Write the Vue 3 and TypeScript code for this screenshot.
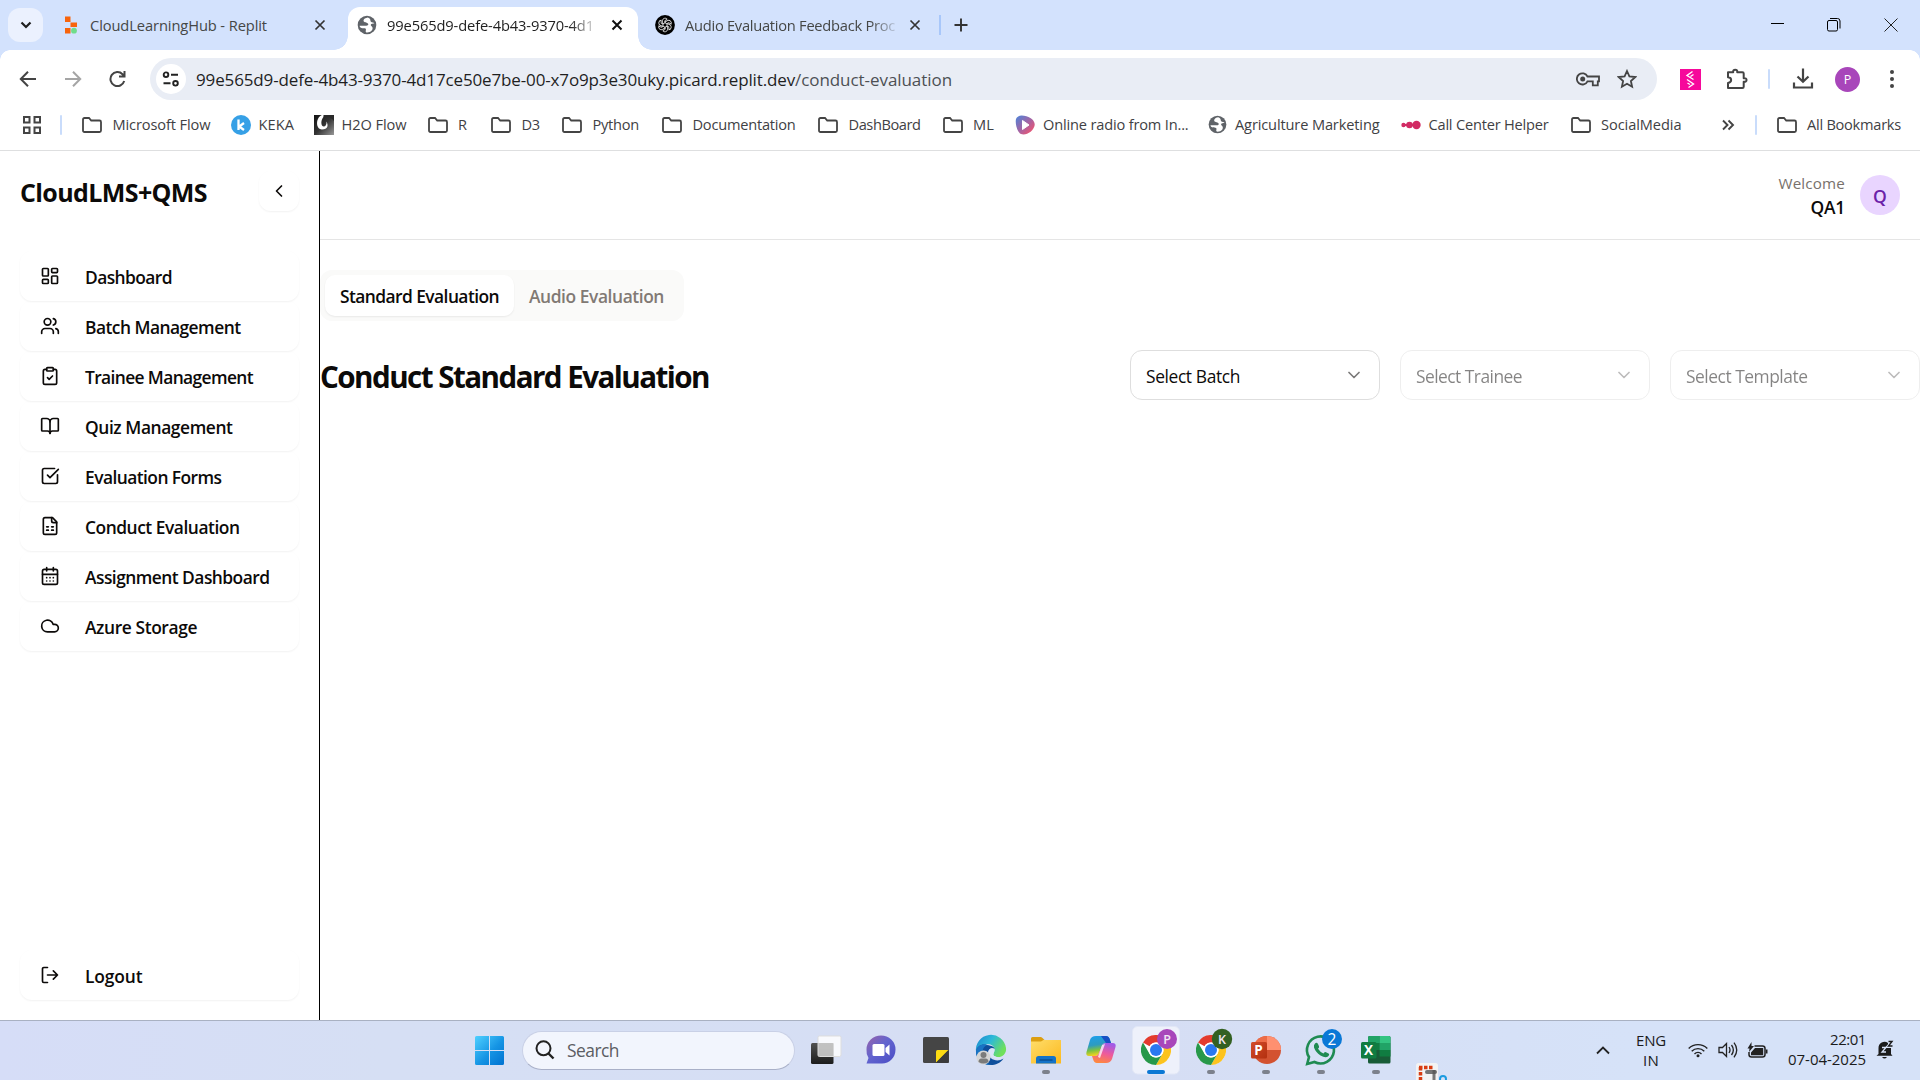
<script setup lang="ts">
import type { Directive } from 'vue'

// Tracks a label in or out so that it occupies the given width in pixels.
const vFit: Directive<HTMLElement, number> = {
  mounted(el, { value }) {
    const natural = el.getBoundingClientRect().width
    const count = (el.textContent ?? '').trim().length
    if (count > 0) el.style.letterSpacing = `${(value - natural) / count}px`
  },
}

interface Bookmark { label: string; icon: 'folder' | 'keka' | 'h2o' | 'radio' | 'globe' | 'dots'; slot: number; width: number }
const bookmarks: Bookmark[] = [
  { label: 'Microsoft Flow', icon: 'folder', slot: 148.5, width: 98 },
  { label: 'KEKA', icon: 'keka', slot: 83, width: 35.5 },
  { label: 'H2O Flow', icon: 'h2o', slot: 114, width: 65 },
  { label: 'R', icon: 'folder', slot: 63.5, width: 9 },
  { label: 'D3', icon: 'folder', slot: 71, width: 18.5 },
  { label: 'Python', icon: 'folder', slot: 100, width: 46.5 },
  { label: 'Documentation', icon: 'folder', slot: 156, width: 103 },
  { label: 'DashBoard', icon: 'folder', slot: 124.5, width: 72 },
  { label: 'ML', icon: 'folder', slot: 72.5, width: 21 },
  { label: 'Online radio from In...', icon: 'radio', slot: 193, width: 145.5 },
  { label: 'Agriculture Marketing', icon: 'globe', slot: 192.5, width: 144.5 },
  { label: 'Call Center Helper', icon: 'dots', slot: 170, width: 120 },
  { label: 'SocialMedia', icon: 'folder', slot: 148, width: 80.5 },
]

interface NavItem { label: string; width: number; icon: string }
const nav: NavItem[] = [
  { label: 'Dashboard', width: 87, icon: '<rect width="7" height="9" x="3" y="3" rx="1"/><rect width="7" height="5" x="14" y="3" rx="1"/><rect width="7" height="9" x="14" y="12" rx="1"/><rect width="7" height="5" x="3" y="16" rx="1"/>' },
  { label: 'Batch Management', width: 155.5, icon: '<path d="M16 21v-2a4 4 0 0 0-4-4H6a4 4 0 0 0-4 4v2"/><circle cx="9" cy="7" r="4"/><path d="M22 21v-2a4 4 0 0 0-3-3.87"/><path d="M16 3.13a4 4 0 0 1 0 7.75"/>' },
  { label: 'Trainee Management', width: 168, icon: '<rect width="8" height="4" x="8" y="2" rx="1"/><path d="M16 4h2a2 2 0 0 1 2 2v14a2 2 0 0 1-2 2H6a2 2 0 0 1-2-2V6a2 2 0 0 1 2-2h2"/><path d="m9 14 2 2 4-4"/>' },
  { label: 'Quiz Management', width: 147.5, icon: '<path d="M12 7v14"/><path d="M3 18a1 1 0 0 1-1-1V4a1 1 0 0 1 1-1h5a4 4 0 0 1 4 4 4 4 0 0 1 4-4h5a1 1 0 0 1 1 1v13a1 1 0 0 1-1 1h-6a3 3 0 0 0-3 3 3 3 0 0 0-3-3z"/>' },
  { label: 'Evaluation Forms', width: 136.5, icon: '<path d="M21 10.5V19a2 2 0 0 1-2 2H5a2 2 0 0 1-2-2V5a2 2 0 0 1 2-2h12.5"/><path d="m9 11 3 3L22 4"/>' },
  { label: 'Conduct Evaluation', width: 154.5, icon: '<path d="M15 2H6a2 2 0 0 0-2 2v16a2 2 0 0 0 2 2h12a2 2 0 0 0 2-2V7Z"/><path d="M14 2v4a2 2 0 0 0 2 2h4"/><path d="M8 13h2"/><path d="M14 13h2"/><path d="M8 17h2"/><path d="M14 17h2"/>' },
  { label: 'Assignment Dashboard', width: 184.5, icon: '<path d="M8 2v4"/><path d="M16 2v4"/><rect width="18" height="18" x="3" y="4" rx="2"/><path d="M3 10h18"/><path d="M8 14h.01"/><path d="M12 14h.01"/><path d="M16 14h.01"/><path d="M8 18h.01"/><path d="M12 18h.01"/><path d="M16 18h.01"/>' },
  { label: 'Azure Storage', width: 112, icon: '<path d="M17.5 19H9a7 7 0 1 1 6.71-9h1.79a4.5 4.5 0 1 1 0 9Z"/>' },
]

const selects = [
  { label: 'Select Batch', width: 94, disabled: false },
  { label: 'Select Trainee', width: 106, disabled: true },
  { label: 'Select Template', width: 121.5, disabled: true },
]
</script>

<template>
  <div class="screen">
    <svg class="defs" width="0" height="0">
      <defs>
        <linearGradient id="g-win" x1="0" y1="0" x2="1" y2="1"><stop offset="0" stop-color="#4fd0ff" /><stop offset=".55" stop-color="#1594e4" /><stop offset="1" stop-color="#0072d0" /></linearGradient>
        <linearGradient id="g-chat" x1="0" y1="0" x2="1" y2="1"><stop offset="0" stop-color="#9a63a8" /><stop offset=".45" stop-color="#6264cf" /><stop offset="1" stop-color="#4a4cc4" /></linearGradient>
        <linearGradient id="g-edge" x1="0" y1="0" x2="1" y2=".5"><stop offset="0" stop-color="#1a84cf" /><stop offset=".5" stop-color="#2db9d8" /><stop offset="1" stop-color="#6fe05a" /></linearGradient>
        <linearGradient id="g-folder" x1="0" y1="0" x2="1" y2="1"><stop offset="0" stop-color="#ffdd6a" /><stop offset="1" stop-color="#fcb91e" /></linearGradient>
        <linearGradient id="g-cop1" x1="0" y1="0" x2=".2" y2="1"><stop offset="0" stop-color="#1c9ff0" /><stop offset=".5" stop-color="#2d9bc0" /><stop offset=".75" stop-color="#7cc243" /><stop offset="1" stop-color="#f2d21f" /></linearGradient>
        <linearGradient id="g-cop2" x1=".6" y1="0" x2=".3" y2="1"><stop offset="0" stop-color="#a05be8" /><stop offset=".5" stop-color="#ee5a9b" /><stop offset="1" stop-color="#ff8a3c" /></linearGradient>
        <linearGradient id="g-radio" x1="0" y1="0" x2="1" y2="1"><stop offset=".1" stop-color="#5b7fd0" /><stop offset=".5" stop-color="#a464a4" /><stop offset=".9" stop-color="#f2546e" /></linearGradient>
        <linearGradient id="g-h2o" x1="0" y1="0" x2="1" y2="1"><stop offset="0" stop-color="#111" /><stop offset=".5" stop-color="#333" /><stop offset="1" stop-color="#999" /></linearGradient>
        <linearGradient id="g-dark" x1="0" y1="0" x2="0" y2="1"><stop offset="0" stop-color="#505050" /><stop offset="1" stop-color="#1c1c1c" /></linearGradient>
        <linearGradient id="g-ppt" x1="0" y1="0" x2="1" y2="1"><stop offset="0" stop-color="#d24a2a" /><stop offset="1" stop-color="#b3300f" /></linearGradient>
        <symbol id="i-globe" viewBox="0 0 20 20"><circle cx="10" cy="10" r="9.3" fill="#5f6368" /><path d="M10.8 2.4c-2.3.3-4.3 1.5-4.3 3.1 0 2.3 3.3 1.7 4.5 3.1.9 1.4-.2 2.3-2.2 2.2H2.6C3 13.500 5.500 13.200 7.700 13.300c1.500.2 1.400 1.500 1 2.700-.2.8.3 1.500 1.400 1.600 4-.1 6-2.800 5.400-5-.4-1.400-2-1.500-1.700-2.800.3-1.300 2-1.100 3.600-1.300-.5-1.500-2.700-.9-3.500-1.800-.9-1.200.2-3.300-3.100-4.300z" fill="#fff" /></symbol>
        <symbol id="i-chrome" viewBox="-15 -15 30 30"><circle r="15" fill="#fff" /><path d="M-13-7.500A15 15 0 0 1 13-7.500H0A7.500 7.500 0 0 0-6.500-3.750Z" fill="#e33b2e" /><path d="M13-7.500A15 15 0 0 1 0 15L6.500 3.750A7.500 7.500 0 0 0 0-7.500Z" fill="#fcc31e" /><path d="M0 15A15 15 0 0 1-13-7.500L-6.500 3.750A7.500 7.500 0 0 0 6.500 3.750Z" fill="#27984a" /><circle r="7.500" fill="#fff" /><circle r="6" fill="#2a78f0" /></symbol>
      </defs>
    </svg>

    <header class="tabstrip">
      <div class="tab-search"><svg width="12" height="8" viewBox="0 0 12 8"><path d="M1.500 1.500 6 6l4.500-4.500" fill="none" stroke="#1f1f1f" stroke-width="2.200" /></svg></div>
      <div class="tab first">
        <svg class="replit" width="14" height="18" viewBox="0 0 14 18"><path d="M1 .5h5.500V6H1zM6.500 6.500H13V11H6.500zM1 12h5.500v5.500H1z" fill="#f8640c" /><circle cx="10" cy="14.700" r="2.900" fill="#6fdd8b" /></svg>
        <span class="tab-text"><span v-fit="177" class="fit">CloudLearningHub - Replit</span></span>
        <svg class="x" width="12" height="12" viewBox="0 0 12 12"><path d="m1.500 1.500 9 9m0-9-9 9" /></svg>
      </div>
      <div class="tab active">
        <svg class="favicon" width="20" height="20"><use href="#i-globe" /></svg>
        <span class="tab-text faded"><span v-fit="207" class="fit">99e565d9-defe-4b43-9370-4d1</span></span>
        <svg class="x" width="12" height="12" viewBox="0 0 12 12"><path d="m1.500 1.500 9 9m0-9-9 9" /></svg>
      </div>
      <div class="tab third">
        <svg width="20" height="20" viewBox="-10 -10 20 20"><circle r="9.900" fill="#000" /><g fill="none" stroke="#ddd" stroke-width=".9"><path v-for="n in 6" :key="n" :transform="`rotate(${n * 60})`" d="M-2.600-1.500V-4.200a2.700 2.700 0 0 1 4.800-1.600L-.2-4.300V-2.400L2.600-.8" /></g></svg>
        <span class="tab-text faded"><span v-fit="210" class="fit">Audio Evaluation Feedback Proc</span></span>
        <svg class="x" width="12" height="12" viewBox="0 0 12 12"><path d="m1.500 1.500 9 9m0-9-9 9" /></svg>
      </div>
      <i class="strip-divider"></i>
      <svg class="plus" width="14" height="14" viewBox="0 0 14 14"><path d="M7 .5v13M.5 7h13" stroke="#333" stroke-width="1.900" /></svg>
      <div class="window-controls">
        <svg width="14" height="14" viewBox="0 0 14 14"><path d="M1 5.500h13" stroke="#000" /></svg>
        <svg width="14" height="14" viewBox="0 0 14 14" fill="none" stroke="#000"><rect x=".5" y="2.500" width="10" height="10.500" rx="1.500" /><path d="M3 .5h7.500q2.500 0 2.500 2.500v7.500" /></svg>
        <svg width="14" height="14" viewBox="0 0 14 14"><path d="m.5.5 13 13m0-13-13 13" stroke="#222" /></svg>
      </div>
    </header>

    <div class="toolbar">
      <div class="nav-buttons">
        <svg width="18" height="18" viewBox="0 0 18 18"><path d="M17 9H2M9 1.800 1.800 9 9 16.200" /></svg>
        <svg class="off" width="18" height="18" viewBox="0 0 18 18"><path d="M1 9h15M9 1.800 16.200 9 9 16.200" /></svg>
        <svg width="18" height="18" viewBox="0 0 18 18"><path d="M15.200 11A7 7 0 1 1 13.500 4.200l1.800 1.800M15.500 1v5.500H10" /></svg>
      </div>
      <div class="omnibox">
        <span class="site-info"><svg width="18" height="16" viewBox="0 0 18 16" fill="none" stroke="#222" stroke-width="1.900"><circle cx="4" cy="3.700" r="2.300" /><path d="M9 3.700h7M1.500 12.300h7" /><circle cx="13.500" cy="12.300" r="2.300" /></svg></span>
        <span class="url"><span v-fit="599" class="fit">99e565d9-defe-4b43-9370-4d17ce50e7be-00-x7o9p3e30uky.picard.replit.dev</span><span v-fit="157" class="fit path">/conduct-evaluation</span></span>
        <svg class="key" width="24" height="16" viewBox="0 0 24 16" fill="none" stroke="#444" stroke-width="1.800"><path d="M11.500 5.500H23v4.800h-1.200v4h-5v-4H11.500A5.600 5.600 0 1 1 11.500 5.500Z" /><circle cx="6.700" cy="8" r="2.500" fill="#444" stroke="none" /></svg>
        <svg class="star" width="20" height="20" viewBox="0 0 20 20"><path d="m10 2 2.400 5.400 5.900.6-4.400 4 1.200 5.700L10 14.700l-5.100 3 1.200-5.700-4.400-4 5.900-.6Z" fill="none" stroke="#444" stroke-width="1.800" /></svg>
      </div>
      <svg class="ext" width="21" height="21" viewBox="0 0 21 21"><path fill="#f6099b" d="M0 0h21v21H0z" /><path d="M12.500 2.500 7 6.500l6.500 4M13.500 5.500l-3 2M7 10.500l6.500 4.500-5 3.500M7.500 14l2.500 1.500" fill="none" stroke="#fff" stroke-width="1.400" /></svg>
      <svg class="puzzle" width="22" height="22" viewBox="0 0 22 22"><path d="M2 4.200h5.200c-.7-3.400 4.800-3.400 4 0h5.200q1.300 0 1.300 1.300v4.700c3.800-.7 3.800 4.300 0 3.600v5q0 1.300-1.300 1.300H2v-5.200c4.200-.8 4.200-5.300 0-5.700Z" fill="none" stroke="#444" stroke-width="2" stroke-linejoin="round" /></svg>
      <i class="bar-divider"></i>
      <svg class="download" width="22" height="22" viewBox="0 0 22 22"><path d="M11 .5v13M5.500 8.500 11 13.800 16.500 8.500M2 14.500v5h18v-5" fill="none" stroke="#444" stroke-width="2.200" /></svg>
      <span class="profile">P</span>
      <svg class="kebab" width="4" height="20" viewBox="0 0 4 20" fill="#444"><circle cx="2" cy="3" r="2" /><circle cx="2" cy="10" r="2" /><circle cx="2" cy="17" r="2" /></svg>
    </div>

    <div class="bookmarks">
      <svg class="apps" width="18" height="18" viewBox="0 0 18 18" fill="none" stroke="#444" stroke-width="2"><path d="M1 1h5.500v5.500H1zM11.500 1H17v5.500h-5.500zM1 11.500h5.500V17H1zM11.500 11.500H17V17h-5.500z" /></svg>
      <i class="bar-divider first-divider"></i>
      <div v-for="b in bookmarks" :key="b.label" class="bookmark" :class="{ wide: b.icon === 'folder' }" :style="{ width: b.slot + 'px' }">
        <svg v-if="b.icon === 'folder'" width="20" height="20" viewBox="0 0 20 20"><path d="M1 4.500q0-1.500 1.500-1.500H7l2.200 2.500h8.300q1.500 0 1.500 1.500v8.500q0 1.500-1.500 1.500h-15Q1 17 1 15.500Z" fill="none" stroke="#444" stroke-width="1.800" /></svg>
        <svg v-else-if="b.icon === 'keka'" width="20" height="20" viewBox="0 0 20 20"><circle cx="10" cy="10" r="10" fill="#36a0e6" /><path d="M7.500 4.500v10.500M13 8l-4.800 3.500L13 15" fill="none" stroke="#fff" stroke-width="2.300" /></svg>
        <svg v-else-if="b.icon === 'h2o'" width="20" height="20" viewBox="0 0 20 20"><path fill="url(#g-h2o)" d="M0 0h20v20H0z" /><path d="M8 0C2 2 1 14 8 14.500c6 0 6.500-4 4.500-8 .5 5-3 6-4.500 4C6.500 7 8 3 11 0Z" fill="#fff" /><path d="M9.500 0H20v6C17 1.500 13 1.500 9.500 2Z" fill="#2a2a2a" /></svg>
        <svg v-else-if="b.icon === 'radio'" width="20" height="20" viewBox="0 0 20 20"><path d="M1 4Q3-.5 9 .7c7 1.300 11 5 10.700 9.300C19 16 11 21 6 19 2 17 0 8 1 4Z" fill="url(#g-radio)" /><path d="M7.500 5.500v9l6.500-4.500Z" fill="#fff" stroke="#fff" stroke-linejoin="round" /></svg>
        <svg v-else-if="b.icon === 'globe'" width="19" height="19"><use href="#i-globe" /></svg>
        <svg v-else width="20" height="10" viewBox="0 0 20 10"><path d="M2 5h14" stroke="#d22b64" stroke-width="2" /><circle cx="2.500" cy="5" r="2.200" fill="#d22b64" /><circle cx="8.500" cy="5" r="3.300" fill="#d22b64" /><circle cx="15.500" cy="5" r="4.200" fill="#d22b64" /></svg>
        <span class="bm-text"><span v-fit="b.width" class="fit">{{ b.label }}</span></span>
      </div>
      <svg class="more" width="14" height="12" viewBox="0 0 14 12"><path d="m2 1.500 4.500 4.500L2 10.500M7.500 1.500 12 6l-4.500 4.500" fill="none" stroke="#444" stroke-width="1.900" /></svg>
      <i class="bar-divider second-divider"></i>
      <div class="bookmark wide">
        <svg width="20" height="20" viewBox="0 0 20 20"><path d="M1 4.500q0-1.500 1.500-1.500H7l2.200 2.500h8.300q1.500 0 1.500 1.500v8.500q0 1.500-1.500 1.500h-15Q1 17 1 15.500Z" fill="none" stroke="#444" stroke-width="1.800" /></svg>
        <span class="bm-text"><span v-fit="94" class="fit">All Bookmarks</span></span>
      </div>
    </div>

    <div class="page">
      <aside class="sidebar">
        <div class="brand-row">
          <h1 class="brand"><span v-fit="187" class="fit">CloudLMS+QMS</span></h1>
          <button class="collapse"><svg class="lucide" viewBox="0 0 24 24"><path d="m15 18-6-6 6-6" /></svg></button>
        </div>
        <nav class="menu">
          <a v-for="item in nav" :key="item.label" class="menu-item">
            <svg class="lucide" viewBox="0 0 24 24" v-html="item.icon"></svg>
            <span class="menu-text"><span v-fit="item.width" class="fit">{{ item.label }}</span></span>
          </a>
        </nav>
        <a class="menu-item logout">
          <svg class="lucide" viewBox="0 0 24 24"><path d="m16 17 5-5-5-5M21 12H9M9 3H4.500A1.500 1.500 0 0 0 3 4.500v15A1.500 1.500 0 0 0 4.500 21H9" /></svg>
          <span class="menu-text"><span v-fit="57.5" class="fit">Logout</span></span>
        </a>
      </aside>
      <main class="content">
        <div class="topbar">
          <div class="user">
            <span class="welcome"><span v-fit="66.5" class="fit">Welcome</span></span>
            <span class="user-name"><span v-fit="34.5" class="fit">QA1</span></span>
          </div>
          <span class="avatar">Q</span>
        </div>
        <div class="switcher">
          <button class="switch on"><span v-fit="159" class="fit">Standard Evaluation</span></button>
          <button class="switch"><span v-fit="135" class="fit">Audio Evaluation</span></button>
        </div>
        <div class="title-row">
          <h2 class="title"><span v-fit="389" class="fit">Conduct Standard Evaluation</span></h2>
          <div class="selects">
            <button v-for="s in selects" :key="s.label" class="select" :class="{ disabled: s.disabled }">
              <span class="select-text"><span v-fit="s.width" class="fit">{{ s.label }}</span></span>
              <svg class="lucide" viewBox="0 0 24 24"><path d="m6 9 6 6 6-6" /></svg>
            </button>
          </div>
        </div>
      </main>
    </div>

    <footer class="taskbar">
      <svg class="start" width="29" height="29" viewBox="0 0 29 29"><path d="M1.500 0H14v14H0V1.500Q0 0 1.500 0ZM15 0h12.500Q29 0 29 1.500V14H15ZM0 15h14v14H1.500Q0 29 0 27.500ZM15 15h14v12.500q0 1.500-1.500 1.500H15Z" fill="url(#g-win)" /></svg>
      <div class="search">
        <svg width="20" height="20" viewBox="0 0 20 20"><circle cx="8.500" cy="8.300" r="7" fill="none" stroke="#222" stroke-width="2" /><path d="m13.500 13.500 5 5" stroke="#222" stroke-width="2.400" /></svg>
        <span class="search-text"><span v-fit="52" class="fit">Search</span></span>
      </div>
      <div class="apps-row">
        <svg class="app" viewBox="-27 -30 55 60"><rect x="-15" y="-7" width="22.500" height="21" rx="1.500" fill="url(#g-dark)" /><rect x="-8" y="-14" width="23" height="20.500" rx="1.500" fill="#fff" fill-opacity=".82" stroke="#ddd" /><path d="M-7.500-7H7.500V6H-7.500Z" fill="#aaa" opacity=".55" /></svg>
        <svg class="app" viewBox="-27 -30 55 60"><path d="M0-14.500A14.500 14 0 0 1 14.500-.5C14.500 8 8 14 0 13.500H-14.500L-12.500 8A14.500 14 0 0 1-14.500-.5 14.500 14 0 0 1 0-14.500Z" fill="url(#g-chat)" /><rect x="-8.500" y="-6" width="12" height="12" rx="1.500" fill="#fff" /><path d="m4.500-2 4-3.500V5.500l-4-3.500Z" fill="#fff" /></svg>
        <svg class="app" viewBox="-27 -30 55 60"><rect x="-13" y="-13" width="26" height="26" rx="1.500" fill="#454545" /><path d="M0 13V1.500Q0 0 1.500 0H12.500Z" fill="#fddc12" /><path d="M0 12.500 12.500 0V13H0Z" fill="#3b3b3b" /></svg>
        <svg class="app" viewBox="-27 -30 55 60"><path d="M-15 2A15 15 0 0 1 15-2C16 5 9 8.500 4.500 6.500 0 5 4 3 3.500-1 3-5-2-7-7-5-13-3-15 0-15 2Z" fill="url(#g-edge)" /><path d="M-15 2C-14.500-4-9-6.500-4-5 1-4 3.500-3.500 3.500-1 1-3-3-1-3 3-2.500 9 6 13 12.500 8.500 9 14 3 15.500-2 15-9 14-15 9-15 2Z" fill="#0e4f9c" /><path d="M-15 2C-14.500-4-9-6.500-4-5-9-3-10 4-7 9-5 13-2 14.500 1 15-8 15.500-15 9-15 2Z" fill="#1a74c4" /><path d="M3.500-1C1-3-3-1-2.500 2.500-1.500 7.500 6 10.500 12 8 9 8.500 6 7.500 4.500 6.500 0 5 4 3 3.500-1Z" fill="#dbe4f7" /><circle cx="-7.500" cy="7.500" r="7" fill="#d5d5d5" /><circle cx="-7.500" cy="5" r="3" fill="#7b7b7b" /><path d="M-12.500 12q0-3.500 3-3.500h4q3 0 3 3.500-5 3-10 0Z" fill="#7b7b7b" /></svg>
        <svg class="app" viewBox="-27 -30 55 60"><path d="M-15-10v-1.500Q-15-13-13.500-13h8q1 0 2 1l2 2H13.500Q15-10 15-8.500V0H-15Z" fill="#dc9e11" /><path d="M-15-8.500H-5l2.500-1.500H14q1 0 1 1V13.500H-15Z" fill="url(#g-folder)" /><path d="M-10 13.500V8.500Q-10 6-7.500 6H7.500Q10 6 10 8.500v5Z" fill="#1473c8" /><path d="M-6.500 10h13" stroke="#0b4f94" stroke-width="1.500" /><rect class="dot" x="-4" y="20" width="8" height="4" rx="2" /></svg>
        <svg class="app" viewBox="-27 -30 55 60"><path d="M-5-14H5q3 0 4 4l1 3H5q-3 0-4 3L-2 3q-1 3-4 3h-6q-3.500 0-2.500-4l3.500-12q1.200-4 6-4Z" fill="url(#g-cop1)" /><path d="M0-14H5q3 0 4 4l1 3H5Z" fill="#174fc4" /><path d="M5 13H-4q-3 0-4-4L-9 6h3q3 0 4-3L1-4q1-3 4-3h6.500q4 0 3 4L11 9q-1.500 4-6 4Z" fill="url(#g-cop2)" /><path d="m1-5-4 12 2 1 5-14Z" fill="#fff" opacity=".75" /></svg>
        <svg class="app" viewBox="-27 -30 55 60"><rect x="-23.500" y="-23.500" width="47" height="47.500" rx="5" fill="#eef1fb" stroke="#e2e7f6" /><use href="#i-chrome" x="-15" y="-15" width="30" height="30" /><circle cx="11" cy="-11" r="10" fill="#a846ba" /><text x="11" y="-6.500" class="badge-letter">P</text><rect x="-9" y="20" width="18" height="4" rx="2" fill="#0b78d4" /></svg>
        <svg class="app" viewBox="-27 -30 55 60"><use href="#i-chrome" x="-15" y="-15" width="30" height="30" /><circle cx="11" cy="-11" r="10.200" fill="#336022" /><text x="11" y="-6.500" class="badge-letter">K</text><rect class="dot" x="-4" y="20" width="8" height="4" rx="2" /></svg>
        <svg class="app" viewBox="-27 -30 55 60"><circle cx="1" cy="0" r="14" fill="#d35230" /><path d="M1-14A14 14 0 0 1 15 0H1Z" fill="#ff9070" /><path d="M1-14A14 14 0 0 0-13 0H1Z" fill="#ed6c47" /><rect x="-15" y="-8" width="16" height="16.500" rx="1.500" fill="url(#g-ppt)" /><text x="-7.500" y="4.800" class="office">P</text><rect class="dot" x="-4" y="20" width="8" height="4" rx="2" /></svg>
        <svg class="app" viewBox="-27 -30 55 60"><path d="M-13.800 14-12 7A13.500 13.500 0 1 1-6.500 12Z" fill="#d6e1f6" stroke="#1f8b52" stroke-width="2.600" /><path d="M-6-6.500q1.800-1.500 3 .5l1 2.200q.5 1-1 2.500Q-.5 2.500 2.500 3.500q1.500-2 2.500-1.300l2.500 1.300q1.500 1-.5 3Q4.500 8.500-.5 5.500-5.500 2-7-2.500q-.5-2.500 1-4Z" fill="#1f8b52" /><circle cx="11" cy="-11" r="10" fill="#0a78d6" /><text x="11" y="-5.500" class="badge-num">2</text><rect class="dot" x="-4" y="20" width="8" height="4" rx="2" /></svg>
        <svg class="app" viewBox="-27 -30 55 60"><rect x="-8" y="-14" width="22.500" height="27.500" rx="1.500" fill="#185c37" /><path d="M-8-7V-12.500Q-8-14-6.500-14H3.500V-7Z" fill="#21a366" /><path d="M3.500-14h9.500q1.500 0 1.500 1.500V-7h-11Z" fill="#33c481" /><path d="M-8-7H3.500V0H-8Z" fill="#107c41" /><path d="M3.500-7h11V0h-11Z" fill="#21a366" /><path d="M3.500 0h11v6.500h-11Z" fill="#107c41" /><rect x="-15" y="-8" width="15.500" height="16.500" rx="1.500" fill="#107c41" /><text x="-7.500" y="4.800" class="office">X</text><rect class="dot" x="-4" y="20" width="8" height="4" rx="2" /></svg>
        <svg class="app" viewBox="-27 -30 55 60"><rect x="-15" y="13" width="22" height="20" rx="2.500" fill="#f3f3f3" /><path d="M-12 17.500H2M-10.500 17v13" stroke="#d83b10" stroke-width="3.500" stroke-dasharray="3.500 1.500" /><path d="M3 20v11" stroke="#777" stroke-width="3" /><rect x="-6" y="20" width="12" height="4" rx="2" fill="#555" opacity=".8" /><circle cx="12" cy="29" r="3" fill="none" stroke="#1c9be0" stroke-width="2" /></svg>
      </div>
      <div class="tray">
        <svg class="up" width="14" height="9" viewBox="0 0 14 9"><path d="m1 7.500 6-6 6 6" fill="none" stroke="#222" stroke-width="1.800" /></svg>
        <div class="lang"><span v-fit="30" class="fit">ENG</span><span v-fit="16" class="fit">IN</span></div>
        <svg class="wifi" width="20" height="16" viewBox="0 0 20 16" fill="none" stroke="#222" stroke-width="1.400"><path d="M.7 6.500a13 13 0 0 1 18.600 0M3.700 9.200a9 9 0 0 1 12.600 0M6.500 12a5 5 0 0 1 7 0" /><circle cx="10" cy="13.800" r="1.500" fill="#222" stroke="none" /></svg>
        <svg class="vol" width="21" height="18" viewBox="0 0 21 18" fill="none" stroke="#222" stroke-width="1.300"><path d="M1 6.500h3.500l4-4v13l-4-4H1ZM11 6q2 3 0 6M13.500 4q3.700 5 0 10M16 1.700q5.500 7.300 0 14.600" /></svg>
        <svg class="battery" width="21" height="17" viewBox="0 0 21 17"><path d="M7.500 4h8q2.500 0 2.500 2.500v6q0 2.500-2.500 2.500h-11Q2 15 2 12.500V10" fill="none" stroke="#222" stroke-width="1.500" /><path d="M8 6h8.200v7.200H4V10.500Zm10.800 1.500h1.700v4h-1.700ZM4.500 0 .5 6.500h2L2 10l5-6H4.500Z" fill="#222" /></svg>
        <div class="clock"><span v-fit="36" class="fit">22:01</span><span v-fit="78" class="fit">07-04-2025</span></div>
        <svg class="bell" width="18" height="20" viewBox="0 0 18 20"><path d="M2.500 14V8a6 6 0 0 1 9.500-5h3v11l1.500 1.800H.5Z" fill="#1b1b1b" /><path d="M6 17h5q-2.500 3-5 0Z" fill="#1b1b1b" /><path d="M12 2.500h3.500l-3.500 4h4" fill="none" stroke="#d8e3f8" stroke-width="3" /><path d="M6 7.500h4l-4 4.500h4" fill="none" stroke="#d8e3f8" stroke-width="1.300" /><path d="M12.500 1.500h3.500l-3.500 4.500h4" fill="none" stroke="#1b1b1b" stroke-width="1.400" /></svg>
      </div>
    </footer>
  </div>
</template>

<style>
body { margin: 0; overflow: hidden; }
</style>

<style scoped>
.screen { width: 1920px; height: 1080px; display: flex; flex-direction: column; background: #fff; font-family: "Open Sans", "Noto Sans", sans-serif; font-stretch: 94%; color: #0c0a09; overflow: hidden; }
.screen * { box-sizing: border-box; }
svg { display: block; flex: none; }
.defs { position: absolute; }
.fit { display: inline-block; white-space: pre; }
button { font: inherit; border: 0; padding: 0; background: none; color: inherit; }
h1, h2 { margin: 0; }

.tabstrip { height: 50px; background: #d3e2fd; display: flex; align-items: center; flex: none; font-size: 14.7px; color: #454746; line-height: 20px; }
.tab-search { width: 35px; height: 34px; margin-left: 8px; border-radius: 12px; background: #ebf1fe; display: flex; align-items: center; justify-content: center; }
.tab { display: flex; align-items: center; height: 50px; }
.tab .x { stroke: #333; stroke-width: 1.7; }
.tab-text { height: 20px; overflow: hidden; white-space: nowrap; }
.first { width: 305px; padding-left: 21px; }
.first .tab-text { margin-left: 10px; width: 200px; }
.first .x { margin-left: 24px; }
.first .replit { margin-right: 2px; }
.active { position: relative; width: 290px; height: 43px; margin-top: 7px; padding: 0 0 7px 9px; background: #fff; border-radius: 12px 12px 0 0; color: #1f1f1f; }
.active::before, .active::after { content: ""; position: absolute; bottom: 0; width: 14px; height: 14px; }
.active::before { left: -14px; background: radial-gradient(circle at 0 0, transparent 13.5px, #fff 14px); }
.active::after { right: -14px; background: radial-gradient(circle at 100% 0, transparent 13.5px, #fff 14px); }
.active .tab-text { margin-left: 10px; width: 208px; }
.active .x { margin-left: 16px; stroke: #111; stroke-width: 2; }
.third { padding-left: 17px; width: 301px; }
.third .tab-text { margin-left: 10px; width: 211px; }
.third .x { margin-left: 13px; }
.faded { -webkit-mask-image: linear-gradient(90deg, #000 88%, rgba(0, 0, 0, .15)); mask-image: linear-gradient(90deg, #000 88%, rgba(0, 0, 0, .15)); }
.strip-divider { width: 2px; height: 20px; background: #a8c7fa; }
.plus { margin-left: 13px; }
.window-controls { margin-left: auto; display: flex; gap: 43px; padding-right: 22px; }

.toolbar { height: 58px; display: flex; align-items: center; flex: none; position: relative; background: #fff; }
.toolbar::before, .toolbar::after { content: ""; position: absolute; top: 0; width: 10px; height: 10px; }
.toolbar::before { left: 0; background: radial-gradient(circle at 100% 100%, transparent 9.5px, #d3e2fd 10px); }
.toolbar::after { right: 0; background: radial-gradient(circle at 0 100%, transparent 9.5px, #d3e2fd 10px); }
.nav-buttons { display: flex; gap: 27px; margin-left: 19px; fill: none; stroke: #444; stroke-width: 2; }
.nav-buttons .off { stroke: #a5a5a5; }
.omnibox { margin-left: 23px; width: 1507px; height: 42px; border-radius: 21px; background: #e9edf5; display: flex; align-items: center; }
.site-info { width: 30px; height: 30px; border-radius: 50%; background: #fff; margin-left: 6px; display: flex; align-items: center; justify-content: center; }
.url { margin-left: 10px; padding-top: 1px; font-size: 17px; line-height: 24px; white-space: nowrap; color: #1f1f1f; flex: 1; }
.path { color: #4d5054; }
.key { margin-right: 17px; }
.star { margin-right: 20px; }
.ext { margin-left: 23px; }
.puzzle { margin-left: 25px; }
.bar-divider { width: 2px; height: 20px; background: #c9dcfb; border-radius: 1px; }
.toolbar .bar-divider { margin-left: 20px; }
.download { margin-left: 22px; }
.profile { width: 25px; height: 25px; border-radius: 50%; background: #a846ba; color: #fff; font-size: 12.5px; line-height: 25px; text-align: center; margin-left: 21px; }
.kebab { margin-left: 30px; }

.bookmarks { height: 43px; flex: none; border-bottom: 1px solid #dedfe0; display: flex; align-items: center; padding-bottom: 9px; font-size: 14.6px; line-height: 20px; color: #3f4144; }
.apps { margin-left: 23px; }
.first-divider { margin-left: 19px; margin-right: 20px; }
.bookmark { display: flex; align-items: center; gap: 8px; flex: none; white-space: nowrap; }
.bm-text { padding-bottom: 2px; }
.wide { gap: 10.5px; }
.more { margin-left: 2px; }
.second-divider { margin-left: 20px; margin-right: 20px; }

.page { height: 869px; flex: none; display: flex; }
.sidebar { width: 320px; border-right: 1px solid #000; display: flex; flex-direction: column; padding: 20px; }
.brand-row { display: flex; justify-content: space-between; height: 40px; }
.brand { font-size: 25px; line-height: 40px; font-weight: 700; margin-top: 1px; }
.collapse, .menu-item { border-radius: 12px; box-shadow: 0 1px 2px rgba(0, 0, 0, .055); }
.collapse { width: 40px; height: 40px; display: flex; align-items: center; justify-content: center; }
.lucide { width: 20px; height: 20px; fill: none; stroke: currentColor; stroke-width: 2; stroke-linecap: round; stroke-linejoin: round; }
.menu { margin-top: 40px; display: flex; flex-direction: column; }
.menu-item { height: 50px; display: flex; align-items: center; padding-left: 20px; flex: none; }
.menu-text { margin-left: 25px; font-size: 17.4px; line-height: 24px; font-weight: 570; padding-top: 1px; }
.logout { margin-top: auto; }

.content { flex: 1; display: flex; flex-direction: column; }
.topbar { height: 89px; border-bottom: 1px solid #e5e5e5; display: flex; justify-content: flex-end; align-items: center; padding-right: 20px; gap: 15px; }
.user { display: flex; flex-direction: column; align-items: flex-end; gap: 2px; padding-top: 3px; }
.welcome { font-size: 15.2px; line-height: 20px; color: #78716c; }
.user-name { font-size: 17.4px; line-height: 25px; font-weight: 570; }
.avatar { width: 40px; height: 40px; border-radius: 50%; background: #e9d5ff; color: #6b21a8; font-size: 17.5px; font-weight: 600; line-height: 42px; text-align: center; }
.switcher { align-self: flex-start; display: flex; margin-top: 30px; padding: 5px; height: 51px; border-radius: 12px; background: #fafaf9; font-size: 17.4px; line-height: 24px; font-weight: 570; color: #817974; }
.switch { height: 41px; padding: 1px 15px 0; border-radius: 10px; }
.switch.on { background: #fff; color: #0c0a09; box-shadow: 0 1px 2px rgba(0, 0, 0, .07); }
.title-row { margin-top: 29px; height: 50px; display: flex; justify-content: space-between; align-items: center; }
.title { font-size: 29.6px; line-height: 40px; font-weight: 700; padding-top: 3px; white-space: nowrap; }
.selects { display: flex; gap: 20px; }
.select { width: 250px; height: 50px; border: 1px solid #dedede; border-radius: 12px; padding: 0 15px; display: flex; align-items: center; justify-content: space-between; font-size: 17.4px; }
.select.disabled { opacity: .5; }
.select-text { padding-top: 2px; line-height: 24px; }
.select .lucide { opacity: .55; }

.taskbar { height: 60px; flex: none; display: flex; align-items: center; background: linear-gradient(90deg, #d6ddf7, #d6dff4 20%, #d6def4 60%, #d6e2f8 85%); box-shadow: inset 0 1px #a9b1c2; }
.start { margin-left: 475px; }
.search { margin-left: 18px; width: 273px; height: 39px; border-radius: 20px; background: #f2f5fd; border: 1px solid #c9d0e6; border-bottom-color: #a9b0c8; display: flex; align-items: center; padding-left: 12px; }
.search-text { margin-left: 12px; font-size: 17.4px; line-height: 24px; color: #5b5d63; }
.apps-row { margin-left: 4px; display: flex; }
.app { width: 55px; height: 60px; }
.dot { fill: #7c818c; }
.badge-letter { fill: #f2e6f5; font-size: 12.5px; font-weight: 600; text-anchor: middle; }
.badge-num { fill: #fff; font-size: 15.5px; text-anchor: middle; }
.office { fill: #fff; font-size: 13.5px; font-weight: 700; text-anchor: middle; }
.tray { margin-left: auto; display: flex; align-items: center; font-size: 15px; line-height: 20px; color: #1b1b1b; padding-right: 26px; }
.lang { margin-left: 26px; width: 30px; margin-top: -1px; display: flex; flex-direction: column; align-items: center; }
.wifi { margin-left: 22px; }
.vol { margin-left: 10px; }
.battery { margin-left: 8px; }
.clock { margin-left: 20px; margin-top: -3px; display: flex; flex-direction: column; align-items: flex-end; }
.bell { margin-left: 10px; }
</style>
